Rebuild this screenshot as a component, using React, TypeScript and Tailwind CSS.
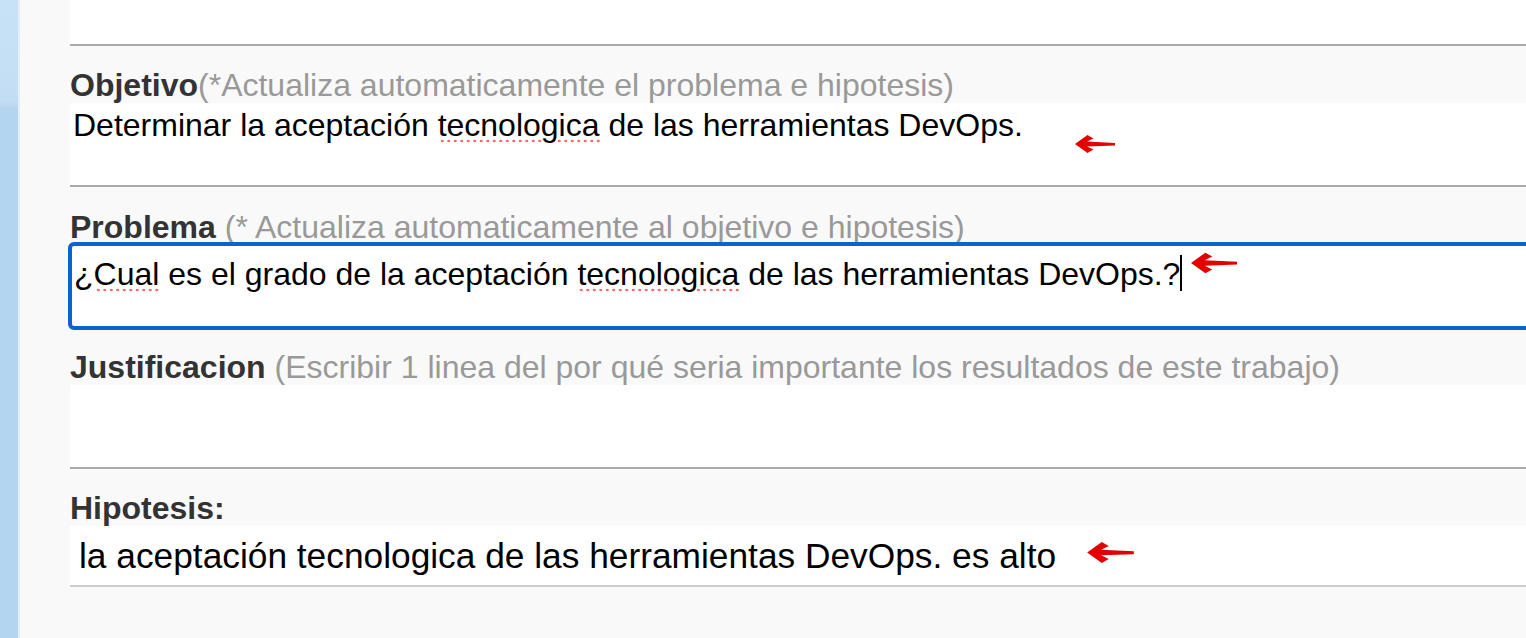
const font = { fontFamily: '"Liberation Sans", Arial, Helvetica, sans-serif' };

function Arrow({ className }: { className: string }) {
  return (
    <svg viewBox="0 0 40 18" className={className} aria-hidden>
      <path
        d="M0 9 L12.5 0 L18.5 3.4 L12 6.6 L40 7.9 L40 10.4 L12 11.4 L18.5 14.6 L12.5 18 Z"
        fill="#e30000"
      />
    </svg>
  );
}

function Misspelled({ children }: { children: string }) {
  return (
    <span className="bg-[radial-gradient(circle,#f26b6b_1.1px,transparent_1.6px)] bg-[length:6.5px_4px] bg-[position:1px_100%] bg-repeat-x">
      {children}
    </span>
  );
}

function Label({ title, hint, className }: { title: string; hint?: string; className: string }) {
  return (
    <div className={`whitespace-nowrap text-[32px] leading-[36px] ${className}`}>
      <span className="font-bold text-[#333]">{title}</span>
      {hint ? <span className="text-[#999]">{hint}</span> : null}
    </div>
  );
}

export default function App() {
  return (
    <div className="flex h-[638px] w-full overflow-hidden bg-[#f9f9f9]" style={font}>
      <div className="flex w-[20px] shrink-0">
        <div className="w-[18px] bg-[linear-gradient(180deg,#c8e1f5_0px,#c3def4_100px,#b3d5f0_110px,#b3d5f0_100%)]" />
        <div className="w-[2px] bg-[#e4eef7]" />
      </div>

      <div className="flex min-w-0 flex-1 flex-col pl-[50px]">
        <div className="h-[46px] shrink-0 border-b-2 border-[#aaa] bg-white" />

        <Label title="Objetivo" hint="(*Actualiza automaticamente el problema e hipotesis)" className="mt-[21px] h-[36px]" />
        <div className="relative h-[84px] shrink-0 border-b-2 border-[#aaa] bg-white pl-[3px] pt-[4px] text-[32px] leading-[36px] text-black">
          Determinar la aceptación <Misspelled>tecnologica</Misspelled> de las herramientas DevOps.
          <Arrow className="absolute left-[1005px] top-[32px] h-[18px] w-[40px]" />
        </div>

        <Label title="Problema" hint=" (* Actualiza automaticamente al objetivo e hipotesis)" className="mt-[22px] h-[33px]" />
        <div className="relative -ml-[2px] -mr-[12px] h-[88px] shrink-0 rounded-[6px] border-4 border-[#0b64cc] bg-white pl-[2px] pt-[3px] text-[32px] leading-[36px] text-black">
          ¿<Misspelled>Cual</Misspelled> es el grado de la aceptación <Misspelled>tecnologica</Misspelled> de las herramientas DevOps.?
          <span className="inline-block h-[36px] w-[2px] translate-y-[6px] bg-black align-baseline" />
          <Arrow className="absolute left-[1119px] top-[6px] h-[22px] w-[46px]" />
        </div>

        <Label
          title="Justificacion"
          hint=" (Escribir 1 linea del por qué seria importante los resultados de este trabajo)"
          className="mt-[19px] h-[36px]"
        />
        <div className="h-[84px] shrink-0 border-b-2 border-[#aaa] bg-white" />

        <Label title="Hipotesis:" className="mt-[21px] h-[36px]" />
        <div className="relative flex h-[61px] shrink-0 items-center border-b-2 border-[#ccc] bg-white pl-[9px] text-[35.3px] leading-[40px] text-black">
          la aceptación tecnologica de las herramientas DevOps. es alto
          <Arrow className="absolute left-[1017px] top-[16px] h-[21px] w-[47px]" />
        </div>
      </div>
    </div>
  );
}
